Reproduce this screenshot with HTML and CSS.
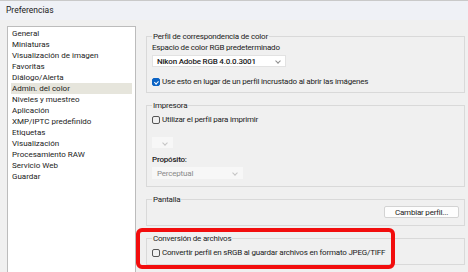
FILE: index.html
```html
<!DOCTYPE html>
<html lang="es">
<head>
  <meta charset="UTF-8" />
  <title>Preferencias</title>
  <link rel="stylesheet" href="styles.css">
</head>
<body>
  <div class="titlebar">Preferencias</div>

  <div class="content">
    <ul class="nav">
      <li>General</li>
      <li>Miniaturas</li>
      <li>Visualización de imagen</li>
      <li>Favoritas</li>
      <li>Diálogo/Alerta</li>
      <li class="selected">Admin. del color</li>
      <li>Niveles y muestreo</li>
      <li>Aplicación</li>
      <li>XMP/IPTC predefinido</li>
      <li>Etiquetas</li>
      <li>Visualización</li>
      <li>Procesamiento RAW</li>
      <li>Servicio Web</li>
      <li>Guardar</li>
    </ul>

    <div class="panel">
      <fieldset class="group g-profile">
        <legend>Perfil de correspondencia de color</legend>
        <div class="field-label">Espacio de color RGB predeterminado</div>
        <div class="select wide strong">Nikon Adobe RGB 4.0.0.3001<span class="chev"></span></div>
        <div class="check-row"><span class="check on"></span>Use esto en lugar de un perfil incrustado al abrir las imágenes</div>
      </fieldset>

      <fieldset class="group g-printer">
        <legend>Impresora</legend>
        <div class="check-row"><span class="check"></span>Utilizar el perfil para imprimir</div>
        <div class="select tiny disabled"><span class="chev"></span></div>
        <div class="field-label strong">Propósito:</div>
        <div class="select mid disabled">Perceptual<span class="chev"></span></div>
      </fieldset>

      <fieldset class="group g-screen">
        <legend>Pantalla</legend>
        <div class="actions"><button class="btn">Cambiar perfil...</button></div>
      </fieldset>

      <fieldset class="group g-convert">
        <legend>Conversión de archivos</legend>
        <div class="check-row"><span class="check"></span>Convertir perfil en sRGB al guardar archivos en formato JPEG/TIFF</div>
      </fieldset>
    </div>
  </div>

  <div class="highlight"></div>
</body>
</html>
```
FILE: styles.css
```css
body {
  margin: 0;
  width: 468px;
  height: 272px;
  overflow: hidden;
  background: #f0f0f0;
  font-family: Roboto, "Noto Sans", sans-serif;
  font-size: 8px;
  color: #1b1b1b;
  position: relative;
}
.titlebar {
  height: 19px;
  border-top: 1px solid #c9c9c9;
  background: #eff1f6;
  padding-left: 6px;
  font-size: 8.5px;
  line-height: 19px;
}
.content {
  display: flex;
  padding: 6px 0 0 7px;
}
.nav {
  list-style: none;
  margin: 0;
  width: 121px;
  height: 250px;
  padding: 1px 3px 0 3px;
  background: #fff;
  border: 1px solid #bcbcbc;
  border-bottom: none;
}
.nav li {
  height: 11px;
  line-height: 11px;
  padding-left: 1px;
  white-space: nowrap;
}
.nav li.selected {
  background: #e6e5dc;
}
.panel {
  display: flex;
  flex-direction: column;
  gap: 8px;
  margin-left: 10px;
  width: 319px;
  padding-top: 6px;
  letter-spacing: -0.2px;
}
.group {
  margin: 0;
  padding: 0 5px 5px 5px;
  border: 1px solid #d9d9d9;
  min-width: 0;
}
.group legend {
  padding: 0 1px;
  line-height: 9px;
}
.field-label {
  line-height: 10px;
  margin-top: 2px;
}
.strong {
  font-weight: 500;
}
.select {
  position: relative;
  height: 12px;
  line-height: 12px;
  padding-left: 4px;
  background: #fff;
  border: 1px solid #e2e2e2;
  box-sizing: border-box;
  margin-top: 2px;
}
.select.wide { width: 134px; }
.select.mid { width: 91px; margin-top: 2px; }
.select.tiny { width: 21px; margin-top: 12px; height: 11px; }
.select.disabled {
  background: #f7f7f7;
  border-color: #f7f7f7;
  color: #8a8a8a;
}
.chev {
  position: absolute;
  right: 5px;
  top: 3px;
  width: 3px;
  height: 3px;
  border-right: 1px solid #8d8d8d;
  border-bottom: 1px solid #8d8d8d;
  transform: rotate(45deg);
}
.disabled .chev {
  border-color: #c4c4c4;
}
.check-row {
  display: flex;
  align-items: center;
  height: 10px;
  line-height: 10px;
  white-space: nowrap;
}
.check {
  width: 6px;
  height: 6px;
  border: 1px solid #555;
  border-radius: 2px;
  margin-right: 2px;
  position: relative;
}
.check.on {
  background: #0b63c4;
  border-color: #0b63c4;
}
.check.on::after {
  content: "";
  position: absolute;
  left: 2px;
  top: 0.5px;
  width: 1.5px;
  height: 3px;
  border-right: 1px solid #fff;
  border-bottom: 1px solid #fff;
  transform: rotate(45deg);
}
.g-profile .check-row { margin-top: 10px; }
.g-printer .check-row { margin-top: 5px; }
.g-printer .field-label { margin-top: 7px; }
.g-printer { padding-bottom: 7px; }
.g-screen { padding-bottom: 7px; }
.g-convert .check-row { margin-top: 5px; }
.g-convert { padding-bottom: 6px; }
.actions {
  display: flex;
  justify-content: flex-end;
  margin-top: 2px;
}
.btn {
  width: 75px;
  height: 12px;
  padding: 0;
  font: inherit;
  letter-spacing: inherit;
  color: #1b1b1b;
  background: #fdfdfd;
  border: 1px solid #d3d3d3;
  border-radius: 2px;
}
.highlight {
  position: absolute;
  left: 136px;
  top: 228px;
  width: 251px;
  height: 33px;
  border: 4px solid #f20d0d;
  border-radius: 6px;
}
```
